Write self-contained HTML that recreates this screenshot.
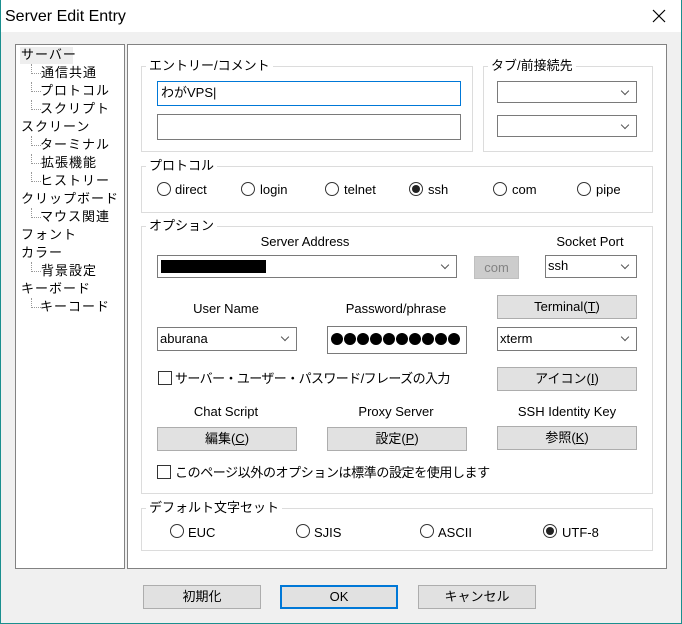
<!DOCTYPE html>
<html><head><meta charset="utf-8"><style>
*{box-sizing:border-box;margin:0;padding:0}
body{width:682px;height:624px;background:#f0f0f0;font-family:"Liberation Sans","Noto Sans CJK JP",sans-serif;font-size:13px;color:#000;position:relative;overflow:hidden}
.a{position:absolute}
#win{left:0;top:0;width:682px;height:624px;border:1px solid #1a8f8f;border-top:none}
#title{left:1px;top:0;width:680px;height:32px;background:#fff}
.panel{background:#fff;border:1px solid #828282}
.grp{border:1px solid #dcdcdc}
.lg{background:#fff;padding:0 3px;line-height:15px;white-space:nowrap}
.inp{background:#fff;border:1px solid #7a7a7a}
.cmb{background:#fff;border:1px solid #7a7a7a;padding-left:2px;line-height:20px;white-space:nowrap}
.cmb:after{content:"";position:absolute;right:8px;top:6px;width:5px;height:5px;border-right:1px solid #555;border-bottom:1px solid #555;transform:rotate(45deg)}
.btn{background:#e1e1e1;border:1px solid #adadad;text-align:center;line-height:22px;white-space:nowrap}
.rad{width:14px;height:14px;border:1px solid #333;border-radius:50%;background:#fff}
.rad.on:after{content:"";position:absolute;left:2px;top:2px;width:8px;height:8px;border-radius:50%;background:#222}
.rl{white-space:nowrap;line-height:15px}
.chk{width:14px;height:14px;border:1px solid #333;background:#fff}
.t{white-space:nowrap;line-height:16px;letter-spacing:-0.6px}
.tr{white-space:nowrap;line-height:18px;letter-spacing:1px}
.dl{border-left:1px dotted #999;border-bottom:1px dotted #999;width:10px}
.lbl{text-align:center;white-space:nowrap;line-height:15px}
.dot{position:absolute;top:6px;width:12px;height:12px;border-radius:50%;background:#000}
</style></head><body>
<div class="a" id="title"></div>
<div class="a" style="left:5px;top:7px;font-size:16px;line-height:19px">Server Edit Entry</div>
<svg class="a" style="left:652px;top:9px" width="14" height="14"><path d="M1 1L13 13M13 1L1 13" stroke="#000" stroke-width="1.2"/></svg>
<div class="a" id="win"></div>

<div class="a panel" style="left:15px;top:44px;width:110px;height:525px"></div>
<div class="a" style="left:20px;top:47px;width:53px;height:17px;background:#eee"></div>
<div class="a tr" style="left:21px;top:46px">サーバー</div>
<div class="a dl" style="left:31px;top:64px;height:10px"></div><div class="a tr" style="left:41px;top:64px">通信共通</div>
<div class="a dl" style="left:31px;top:82px;height:10px"></div><div class="a tr" style="left:40px;top:82px">プロトコル</div>
<div class="a dl" style="left:31px;top:100px;height:10px"></div><div class="a tr" style="left:40px;top:100px">スクリプト</div>
<div class="a tr" style="left:21px;top:118px">スクリーン</div>
<div class="a dl" style="left:31px;top:136px;height:10px"></div><div class="a tr" style="left:40px;top:136px">ターミナル</div>
<div class="a dl" style="left:31px;top:154px;height:10px"></div><div class="a tr" style="left:41px;top:154px">拡張機能</div>
<div class="a dl" style="left:31px;top:172px;height:10px"></div><div class="a tr" style="left:40px;top:172px">ヒストリー</div>
<div class="a tr" style="left:21px;top:190px">クリップボード</div>
<div class="a dl" style="left:31px;top:208px;height:10px"></div><div class="a tr" style="left:40px;top:208px">マウス関連</div>
<div class="a tr" style="left:21px;top:226px">フォント</div>
<div class="a tr" style="left:21px;top:244px">カラー</div>
<div class="a dl" style="left:31px;top:262px;height:10px"></div><div class="a tr" style="left:41px;top:262px">背景設定</div>
<div class="a tr" style="left:21px;top:280px">キーボード</div>
<div class="a dl" style="left:31px;top:298px;height:10px"></div><div class="a tr" style="left:40px;top:298px">キーコード</div>

<div class="a panel" style="left:127px;top:44px;width:540px;height:525px"></div>

<div class="a grp" style="left:141px;top:66px;width:332px;height:86px"></div>
<div class="a lg" style="left:146px;top:58px">エントリー/コメント</div>
<div class="a inp" style="left:157px;top:81px;width:304px;height:25px;border-color:#0078d7;padding-left:3px;line-height:22px">わがVPS|</div>
<div class="a inp" style="left:157px;top:114px;width:304px;height:26px"></div>

<div class="a grp" style="left:483px;top:66px;width:170px;height:86px"></div>
<div class="a lg" style="left:488px;top:58px">タブ/前接続先</div>
<div class="a cmb" style="left:497px;top:81px;width:140px;height:22px"></div>
<div class="a cmb" style="left:497px;top:115px;width:140px;height:22px"></div>

<div class="a grp" style="left:141px;top:166px;width:512px;height:47px"></div>
<div class="a lg" style="left:146px;top:158px">プロトコル</div>
<div class="a rad" style="left:157px;top:182px"></div><div class="a rl" style="left:175px;top:182px">direct</div>
<div class="a rad" style="left:241px;top:182px"></div><div class="a rl" style="left:260px;top:182px">login</div>
<div class="a rad" style="left:325px;top:182px"></div><div class="a rl" style="left:344px;top:182px">telnet</div>
<div class="a rad on" style="left:409px;top:182px"></div><div class="a rl" style="left:428px;top:182px">ssh</div>
<div class="a rad" style="left:493px;top:182px"></div><div class="a rl" style="left:512px;top:182px">com</div>
<div class="a rad" style="left:577px;top:182px"></div><div class="a rl" style="left:596px;top:182px">pipe</div>

<div class="a grp" style="left:141px;top:226px;width:512px;height:268px"></div>
<div class="a lg" style="left:146px;top:218px">オプション</div>
<div class="a lbl" style="left:205px;top:234px;width:200px">Server Address</div>
<div class="a lbl" style="left:540px;top:234px;width:100px">Socket Port</div>
<div class="a cmb" style="left:157px;top:255px;width:300px;height:23px"></div>
<div class="a" style="left:161px;top:260px;width:105px;height:13px;background:#000"></div>
<div class="a btn" style="left:474px;top:256px;width:45px;height:23px;background:#ccc;border-color:#bfbfbf;color:#838383">com</div>
<div class="a cmb" style="left:545px;top:255px;width:92px;height:23px">ssh</div>
<div class="a lbl" style="left:176px;top:301px;width:100px">User Name</div>
<div class="a lbl" style="left:336px;top:301px;width:120px">Password/phrase</div>
<div class="a btn" style="left:497px;top:295px;width:140px;height:24px">Terminal(<u>T</u>)</div>
<div class="a cmb" style="left:157px;top:327px;width:140px;height:24px;line-height:22px">aburana</div>
<div class="a inp" style="left:327px;top:326px;width:140px;height:28px">
<span class="dot" style="left:3px"></span><span class="dot" style="left:16px"></span><span class="dot" style="left:29px"></span><span class="dot" style="left:42px"></span><span class="dot" style="left:55px"></span><span class="dot" style="left:68px"></span><span class="dot" style="left:81px"></span><span class="dot" style="left:94px"></span><span class="dot" style="left:107px"></span><span class="dot" style="left:120px"></span>
</div>
<div class="a cmb" style="left:497px;top:327px;width:140px;height:24px;line-height:22px">xterm</div>
<div class="a chk" style="left:158px;top:371px"></div>
<div class="a t" style="left:175px;top:371px">サーバー・ユーザー・パスワード/フレーズの入力</div>
<div class="a btn" style="left:497px;top:367px;width:140px;height:24px">アイコン(<u>I</u>)</div>
<div class="a lbl" style="left:176px;top:404px;width:100px">Chat Script</div>
<div class="a lbl" style="left:336px;top:404px;width:120px">Proxy Server</div>
<div class="a lbl" style="left:497px;top:404px;width:140px">SSH Identity Key</div>
<div class="a btn" style="left:157px;top:427px;width:140px;height:24px">編集(<u>C</u>)</div>
<div class="a btn" style="left:327px;top:427px;width:140px;height:24px">設定(<u>P</u>)</div>
<div class="a btn" style="left:497px;top:426px;width:140px;height:24px">参照(<u>K</u>)</div>
<div class="a chk" style="left:157px;top:465px"></div>
<div class="a t" style="left:175px;top:465px;letter-spacing:-0.4px">このページ以外のオプションは標準の設定を使用します</div>

<div class="a grp" style="left:141px;top:508px;width:512px;height:43px"></div>
<div class="a lg" style="left:146px;top:500px">デフォルト文字セット</div>
<div class="a rad" style="left:170px;top:524px"></div><div class="a rl" style="left:188px;top:525px">EUC</div>
<div class="a rad" style="left:296px;top:524px"></div><div class="a rl" style="left:314px;top:525px">SJIS</div>
<div class="a rad" style="left:420px;top:524px"></div><div class="a rl" style="left:438px;top:525px">ASCII</div>
<div class="a rad on" style="left:543px;top:524px"></div><div class="a rl" style="left:562px;top:525px">UTF-8</div>

<div class="a btn" style="left:143px;top:585px;width:118px;height:24px">初期化</div>
<div class="a btn" style="left:280px;top:585px;width:118px;height:24px;border:2px solid #0078d7;line-height:20px">OK</div>
<div class="a btn" style="left:418px;top:585px;width:118px;height:24px">キャンセル</div>
</body></html>
